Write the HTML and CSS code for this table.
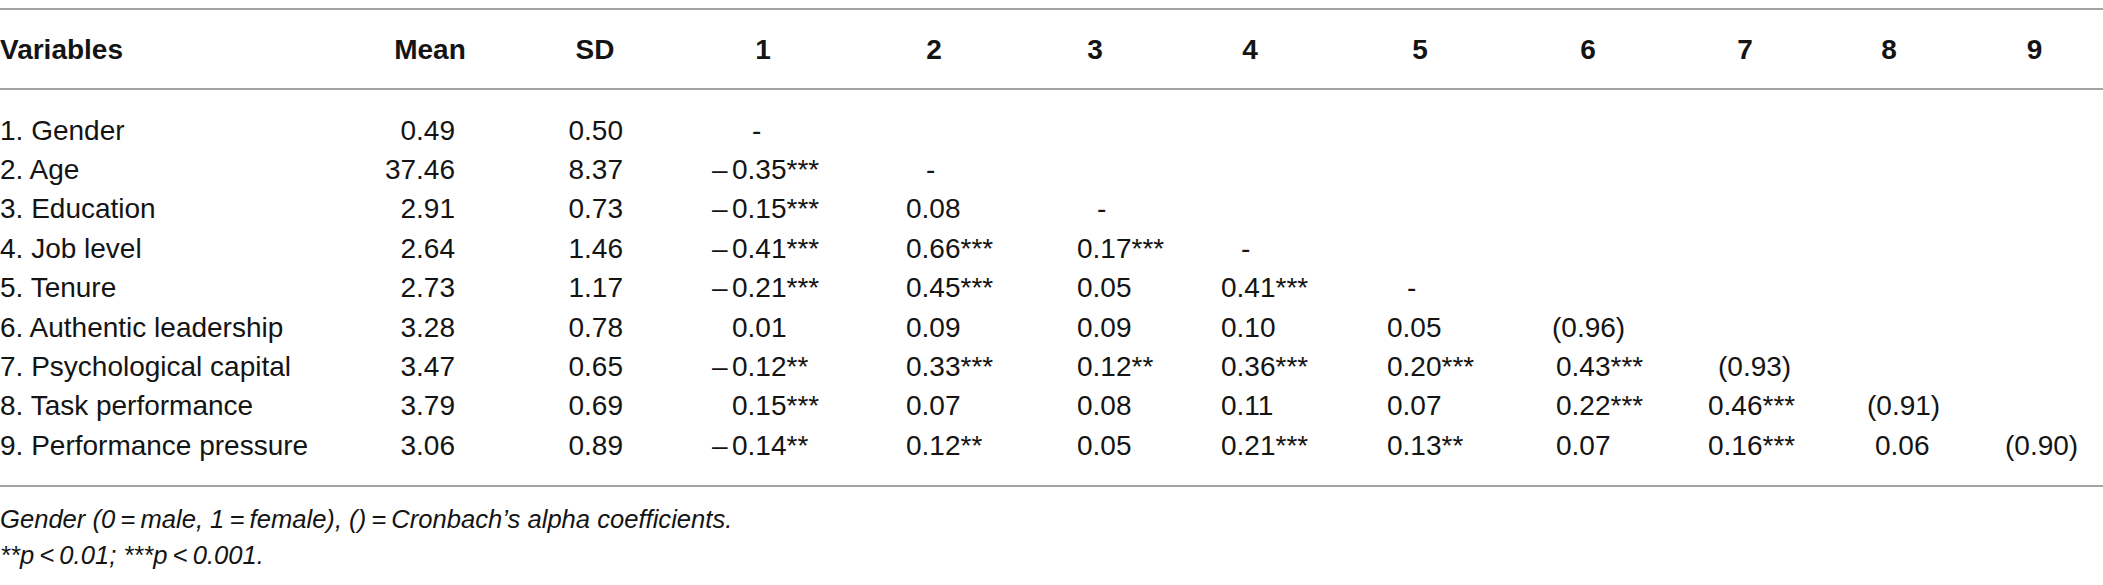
FILE: index.html
```html
<!DOCTYPE html>
<html lang="en">
<head>
<meta charset="utf-8">
<title>Correlation table</title>
<link rel="stylesheet" href="styles.css">
</head>
<body>
<div class="page">
  <table class="corr">
    <colgroup>
      <col class="c-var"><col class="c-mean"><col class="c-sd">
      <col class="c-1"><col class="c-2"><col class="c-3"><col class="c-4"><col class="c-5">
      <col class="c-6"><col class="c-7"><col class="c-8"><col class="c-9">
    </colgroup>
    <thead>
      <tr>
        <th class="var">Variables</th><th>Mean</th><th>SD</th>
        <th>1</th><th>2</th><th>3</th><th>4</th><th>5</th><th>6</th><th>7</th><th>8</th><th>9</th>
      </tr>
    </thead>
    <tbody>
      <tr>
        <td class="var">1. Gender</td><td class="num">0.49</td><td class="num">0.50</td>
        <td><span class="dash">-</span></td><td></td><td></td><td></td><td></td><td></td><td></td><td></td><td></td>
      </tr>
      <tr>
        <td class="var">2. Age</td><td class="num">37.46</td><td class="num">8.37</td>
        <td><span class="neg">–</span>0.35***</td><td><span class="dash">-</span></td><td></td><td></td><td></td><td></td><td></td><td></td><td></td>
      </tr>
      <tr>
        <td class="var">3. Education</td><td class="num">2.91</td><td class="num">0.73</td>
        <td><span class="neg">–</span>0.15***</td><td>0.08</td><td><span class="dash">-</span></td><td></td><td></td><td></td><td></td><td></td><td></td>
      </tr>
      <tr>
        <td class="var">4. Job level</td><td class="num">2.64</td><td class="num">1.46</td>
        <td><span class="neg">–</span>0.41***</td><td>0.66***</td><td>0.17***</td><td><span class="dash">-</span></td><td></td><td></td><td></td><td></td><td></td>
      </tr>
      <tr>
        <td class="var">5. Tenure</td><td class="num">2.73</td><td class="num">1.17</td>
        <td><span class="neg">–</span>0.21***</td><td>0.45***</td><td>0.05</td><td>0.41***</td><td><span class="dash">-</span></td><td></td><td></td><td></td><td></td>
      </tr>
      <tr>
        <td class="var">6. Authentic leadership</td><td class="num">3.28</td><td class="num">0.78</td>
        <td>0.01</td><td>0.09</td><td>0.09</td><td>0.10</td><td>0.05</td><td><span class="par">(0.96)</span></td><td></td><td></td><td></td>
      </tr>
      <tr>
        <td class="var">7. Psychological capital</td><td class="num">3.47</td><td class="num">0.65</td>
        <td><span class="neg">–</span>0.12**</td><td>0.33***</td><td>0.12**</td><td>0.36***</td><td>0.20***</td><td>0.43***</td><td><span class="par">(0.93)</span></td><td></td><td></td>
      </tr>
      <tr>
        <td class="var">8. Task performance</td><td class="num">3.79</td><td class="num">0.69</td>
        <td>0.15***</td><td>0.07</td><td>0.08</td><td>0.11</td><td>0.07</td><td>0.22***</td><td>0.46***</td><td><span class="par">(0.91)</span></td><td></td>
      </tr>
      <tr>
        <td class="var">9. Performance pressure</td><td class="num">3.06</td><td class="num">0.89</td>
        <td><span class="neg">–</span>0.14**</td><td>0.12**</td><td>0.05</td><td>0.21***</td><td>0.13**</td><td>0.07</td><td>0.16***</td><td>0.06</td><td><span class="par">(0.90)</span></td>
      </tr>
    </tbody>
  </table>
  <div class="notes">
    <p>Gender (0&thinsp;=&thinsp;male, 1&thinsp;=&thinsp;female), ()&thinsp;=&thinsp;Cronbach’s alpha coefficients.</p>
    <p>**p&thinsp;&lt;&thinsp;0.01; ***p&thinsp;&lt;&thinsp;0.001.</p>
  </div>
</div>
</body>
</html>
```
FILE: styles.css
```css
html, body {
  margin: 0;
  padding: 0;
  background: #ffffff;
}

body {
  font-family: "Liberation Sans", Arial, Helvetica, sans-serif;
  color: #141414;
}

.page {
  padding-top: 8px;
  width: 2103px;
}

.corr {
  width: 2103px;
  table-layout: fixed;
  border-collapse: separate;
  border-spacing: 0;
  border-top: 2px solid #a3a3a3;
  border-bottom: 2px solid #a3a3a3;
  font-size: 28px;
}

.c-var { width: 360px; }
.c-mean { width: 140px; }
.c-sd { width: 190px; }
.c-1 { width: 146px; }
.c-2 { width: 196px; }
.c-3 { width: 126px; }
.c-4 { width: 184px; }
.c-5 { width: 156px; }
.c-6 { width: 180px; }
.c-7 { width: 134px; }
.c-8 { width: 154px; }
.c-9 { width: 137px; }

.corr th {
  font-weight: bold;
  text-align: center;
  padding: 2px 0 0 0;
  line-height: 76px;
  border-bottom: 2px solid #a3a3a3;
  white-space: nowrap;
}

.corr th.var {
  text-align: left;
}

.corr td {
  padding: 0;
  line-height: 39.4px;
  text-align: left;
  white-space: nowrap;
  font-weight: normal;
}

.corr tbody tr:first-child td {
  padding-top: 20.6px;
}

.corr tbody tr:last-child td {
  padding-bottom: 20px;
}

.corr td.var {
  text-align: left;
}

.corr td.num {
  text-align: right;
}

.corr td:nth-child(2) { padding-right: 45px; }
.corr td:nth-child(3) { padding-right: 67px; }
.corr td:nth-child(4) { padding-left: 42px; }
.corr td:nth-child(5) { padding-left: 70px; }
.corr td:nth-child(6) { padding-left: 45px; }
.corr td:nth-child(7) { padding-left: 63px; }
.corr td:nth-child(8) { padding-left: 45px; }
.corr td:nth-child(9) { padding-left: 58px; }
.corr td:nth-child(10) { padding-left: 30px; }
.corr td:nth-child(11) { padding-left: 63px; }
.corr td:nth-child(12) { padding-left: 39px; }

.neg {
  display: inline-block;
  width: 20px;
  margin-left: -20px;
}

.dash {
  margin-left: 20px;
}

.corr td:nth-child(9) .par { margin-left: -4px; }
.corr td:nth-child(10) .par { margin-left: 10px; }
.corr td:nth-child(11) .par { margin-left: -8px; }

.notes {
  margin-top: 14px;
  font-size: 25.6px;
  font-style: italic;
  line-height: 36px;
}

.notes p {
  margin: 0;
}
```
